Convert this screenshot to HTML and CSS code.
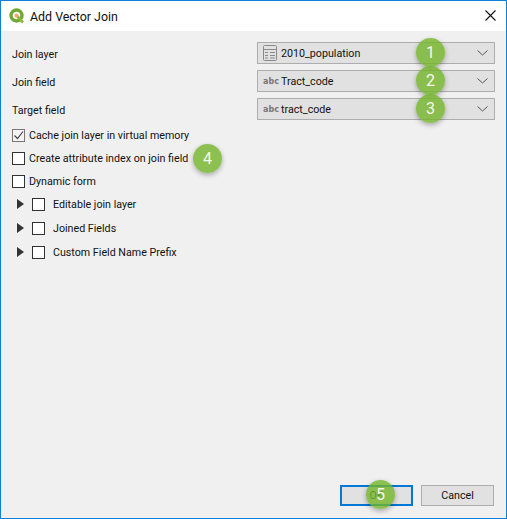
FILE: index.html
```html
<!DOCTYPE html>
<html lang="en">
<head>
<meta charset="utf-8">
<title>Add Vector Join</title>
<link rel="stylesheet" href="styles.css">
</head>
<body>
<div class="window">
  <header class="titlebar">
    <svg class="logo" width="16" height="16" viewBox="0 0 16 16">
      <circle cx="7.500" cy="7.500" r="5.500" fill="none" stroke="#6fa832" stroke-width="3.400"/>
      <path d="M8.500 8.500l5.500 6" stroke="#8cb83a" stroke-width="2.800"/>
      <circle cx="7.500" cy="7.500" r="2" fill="#f0a868"/>
    </svg>
    <span class="title">Add Vector Join</span>
    <svg class="close" width="11" height="11" viewBox="0 0 11 11"><path d="M.5.5l10 10M10.500.5l-10 10" stroke="#111" stroke-width="1.100"/></svg>
  </header>
  <main class="content">
    <div class="fields">
      <label class="label">Join layer</label>
      <div class="combo">
        <svg class="table-icon" width="14" height="16" viewBox="0 0 14 16" fill="none" stroke="#8a8a8a"><rect x=".5" y=".5" width="13" height="15" rx="1"/><path d="M.5 4.500h13M2 7.500h3M7 7.500h5M2 10.500h3M7 10.500h5M2 13h3M7 13h5"/></svg>
        <span class="value">2010_population</span>
        <svg class="chev" width="11" height="6" viewBox="0 0 11 6"><path d="M.5.500l5 4.500 5-4.500" fill="none" stroke="#555"/></svg>
      </div>
      <label class="label">Join field</label>
      <div class="combo">
        <span class="abc">abc</span><span class="value">Tract_code</span>
        <svg class="chev" width="11" height="6" viewBox="0 0 11 6"><path d="M.5.500l5 4.500 5-4.500" fill="none" stroke="#555"/></svg>
      </div>
      <label class="label">Target field</label>
      <div class="combo">
        <span class="abc">abc</span><span class="value">tract_code</span>
        <svg class="chev" width="11" height="6" viewBox="0 0 11 6"><path d="M.5.500l5 4.500 5-4.500" fill="none" stroke="#555"/></svg>
      </div>
    </div>
    <div class="checks">
      <div class="check-row"><span class="box"><svg width="11" height="11" viewBox="0 0 11 11"><path d="M1.500 5.500l3 3 5.500-7" fill="none" stroke="#444" stroke-width="1.200"/></svg></span>Cache join layer in virtual memory</div>
      <div class="check-row"><span class="box"></span>Create attribute index on join field</div>
      <div class="check-row"><span class="box"></span>Dynamic form</div>
    </div>
    <div class="groups">
      <div class="group-row"><span class="arrow"></span><span class="box"></span><span class="group-label">Editable join layer</span></div>
      <div class="group-row"><span class="arrow"></span><span class="box"></span><span class="group-label">Joined Fields</span></div>
      <div class="group-row"><span class="arrow"></span><span class="box"></span><span class="group-label">Custom Field Name Prefix</span></div>
    </div>
    <footer class="buttons">
      <button class="btn btn-default">OK</button>
      <button class="btn">Cancel</button>
    </footer>
  </main>
  <span class="badge badge-1">1</span>
  <span class="badge badge-2">2</span>
  <span class="badge badge-3">3</span>
  <span class="badge badge-4">4</span>
  <span class="badge badge-5">5</span>
</div>
</body>
</html>
```
FILE: styles.css
```css
* { box-sizing: border-box; }
html, body { margin: 0; height: 100%; }
body { font-family: Roboto, "Liberation Sans", Arial, sans-serif; font-size: 10.700px; color: #111; }
.window { position: relative; width: 507px; height: 519px; border: 1px solid #0f7fd8; display: flex; flex-direction: column; background: #f0f0f0; overflow: hidden; }
.titlebar { height: 30px; flex: none; background: #fff; display: flex; align-items: center; padding: 0 10px 0 8px; }
.logo { flex: none; }
.title { margin-left: 5px; font-size: 12.400px; flex: 1; }
.close { flex: none; margin-bottom: 2px; }
.content { flex: 1; display: flex; flex-direction: column; padding: 11px 12px 12px 11px; }
.fields { display: grid; grid-template-columns: 245px 238px; row-gap: 6px; align-items: center; }
.label { padding-top: 2px; }
.combo { height: 22px; background: #e1e1e1; border: 1px solid #adadad; display: flex; align-items: center; padding: 0 6px 0 5px; }
.table-icon { flex: none; margin-right: 4px; }
.abc { font-family: "DejaVu Sans", sans-serif; font-size: 8px; font-weight: 700; color: #777; margin-right: 3px; width: 15px; }
.value { flex: 1; padding-top: 1px; }
.chev { flex: none; }
.checks { display: flex; flex-direction: column; gap: 9px; margin-top: 8px; }
.check-row { display: flex; align-items: center; height: 14px; }
.box { width: 13px; height: 13px; flex: none; background: #fff; border: 1px solid #333; display: flex; align-items: center; justify-content: center; margin-right: 4px; }
.check-row:first-child .box { background: #f4f4f4; border-color: #777; }
.groups { display: flex; flex-direction: column; gap: 10px; margin-top: 9px; }
.group-row { display: flex; align-items: center; height: 14px; padding-left: 5px; }
.arrow { width: 0; height: 0; flex: none; border-left: 7px solid #333; border-top: 5.500px solid transparent; border-bottom: 5.500px solid transparent; margin-right: 8px; }
.group-row .box { margin-right: 8px; }
.buttons { margin-top: auto; display: flex; justify-content: flex-end; gap: 8px; }
.btn { width: 73px; height: 21px; font: inherit; color: #111; background: #e1e1e1; border: 1px solid #adadad; padding: 0; }
.btn-default { border: 2px solid #0078d7; color: #222; }
.badge { position: absolute; width: 29px; height: 29px; border-radius: 50%; background: rgba(115,181,42,.8); color: #f4f8ea; font-size: 16px; display: flex; align-items: center; justify-content: center; box-shadow: 0 2px 5px rgba(0,0,0,.3); }
.badge-1 { left: 415px; top: 37px; }
.badge-2 { left: 415px; top: 65px; }
.badge-3 { left: 415px; top: 93px; }
.badge-4 { left: 192px; top: 143px; }
.badge-5 { left: 365px; top: 479px; }
```
